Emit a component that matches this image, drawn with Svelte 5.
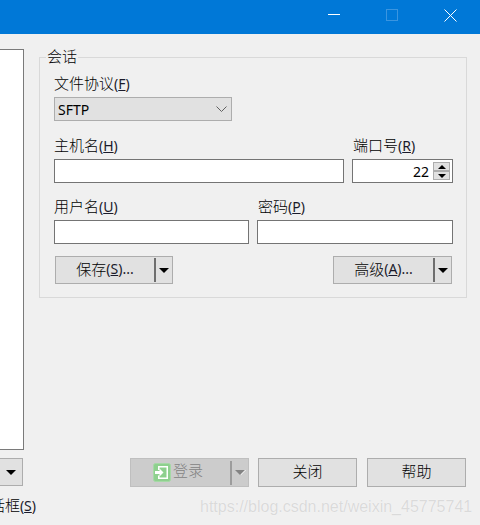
<script>
  const buttonsBottom = ['关闭', '帮助'];
</script>

<div class="window">
  <header class="titlebar">
    <svg class="winicon" width="12" height="12" viewBox="0 0 12 12"><path d="M0 5.5h12" stroke="#fff" fill="none" /></svg>
    <svg class="winicon" width="12" height="13" viewBox="0 0 12 13"><rect x="0.5" y="0.5" width="11" height="11" stroke="#3a95e0" fill="none" /></svg>
    <svg class="winicon" width="13" height="13" viewBox="0 0 13 13"><path d="M0.5 0.5l12 12M12.5 0.5l-12 12" stroke="#fff" fill="none" /></svg>
  </header>

  <div class="content">
    <div class="tree"></div>

    <section class="group">
      <div class="legend">会话</div>

      <label class="lbl first" for="proto">文件协议<span class="key">(<u>F</u>)</span></label>
      <div class="select" id="proto">
        <span>SFTP</span>
        <svg width="11" height="6" viewBox="0 0 11 6"><path d="M0.5 0.5L5.5 5.5l5-5" stroke="#606060" fill="none" /></svg>
      </div>

      <div class="row host">
        <div class="field">
          <label class="lbl" for="host">主机名<span class="key">(<u>H</u>)</span></label>
          <input id="host" type="text" />
        </div>
        <div class="field">
          <label class="lbl inset" for="port">端口号<span class="key">(<u>R</u>)</span></label>
          <div class="portbox" id="port">
            <span class="num">22</span>
            <div class="spin">
              <div class="spinbtn"><i class="up"></i></div>
              <div class="spinbtn"><i class="down"></i></div>
            </div>
          </div>
        </div>
      </div>

      <div class="row user">
        <div class="field">
          <label class="lbl" for="user">用户名<span class="key">(<u>U</u>)</span></label>
          <input id="user" type="text" />
        </div>
        <div class="field">
          <label class="lbl inset" for="pass">密码<span class="key">(<u>P</u>)</span></label>
          <input id="pass" type="password" />
        </div>
      </div>

      <div class="actions">
        <div class="btn split">
          <span class="cap">保存<span class="key">(<u>S</u>)...</span></span>
          <span class="sep"></span>
          <span class="drop"><i class="down big"></i></span>
        </div>
        <div class="btn split">
          <span class="cap">高级<span class="key">(<u>A</u>)...</span></span>
          <span class="sep"></span>
          <span class="drop"><i class="down big"></i></span>
        </div>
      </div>
    </section>
  </div>

  <div class="bottom">
    <div class="btn leftdrop"><i class="down big"></i></div>
    <div class="btn split login">
      <span class="cap">
        <svg width="18" height="19" viewBox="0 0 18 19">
          <rect x="0.5" y="0.5" width="17" height="18" rx="2" fill="#8ed08e" stroke="#a5d9a5" />
          <path d="M5 3h10v13H5v-3.5h1.5V14.5h7v-10h-7V7H5z" fill="#fff" />
          <path d="M2 8h4.5V5.5l4 4-4 4V11H2z" fill="#fff" />
        </svg>
        <span>登录</span>
      </span>
      <span class="sep"></span>
      <span class="drop"><i class="down big"></i></span>
    </div>
    {#each buttonsBottom as b}
      <div class="btn plain">{b}</div>
    {/each}
  </div>

  <div class="foot"><span>登录对话框<span class="key">(<u>S</u>)</span></span></div>

  <div class="watermark">https://blog.csdn.net/weixin_45775741</div>
</div>

<style>
  :global(body) {
    margin: 0;
    background: #f0f0f0;
  }

  .window {
    position: relative;
    width: 480px;
    height: 525px;
    overflow: hidden;
    background: #f0f0f0;
    color: #000;
    font-family: "Noto Sans CJK SC", "Noto Sans", sans-serif;
    font-size: 15px;
    font-weight: 300;
    line-height: 17px;
  }

  .titlebar {
    height: 34px;
    background: #0078d7;
    display: flex;
    align-items: center;
    justify-content: flex-end;
    gap: 46px;
    padding-right: 23px;
    box-sizing: border-box;
  }

  .winicon {
    display: block;
    margin-top: -4px;
  }

  .content {
    display: flex;
    padding-top: 15px;
  }

  .tree {
    width: 24px;
    height: 401px;
    box-sizing: border-box;
    background: #fff;
    border: 1px solid #7a7a7a;
    border-left: 0;
  }

  .group {
    width: 428px;
    height: 241px;
    margin: 8px 0 0 15px;
    padding: 0 13px 0 14px;
    box-sizing: border-box;
    border: 1px solid #d9d9d9;
  }

  .legend {
    width: fit-content;
    margin: -10px 0 0 -8px;
    padding: 0 1px;
    background: #f0f0f0;
    height: 16px;
    line-height: 16px;
  }

  .lbl {
    display: block;
    height: 17px;
    line-height: 17px;
  }

  .lbl.first {
    margin-top: 10px;
  }

  .lbl.inset {
    padding-left: 1px;
  }

  .key {
    font-family: "Noto Sans", sans-serif;
    font-size: 14px;
    font-weight: 400;
    color: #1a1a2a;
  }

  .select {
    width: 178px;
    height: 24px;
    margin-top: 6px;
    padding: 0 4px 0 3px;
    box-sizing: border-box;
    border: 1px solid #adadad;
    background: #e1e1e1;
    display: flex;
    align-items: center;
    justify-content: space-between;
    font-family: "Noto Sans", sans-serif;
    font-size: 14px;
    font-weight: 400;
  }

  .row {
    display: grid;
    column-gap: 8px;
  }

  .row.host {
    grid-template-columns: 290px 101px;
    margin-top: 15px;
  }

  .row.user {
    grid-template-columns: 195px 196px;
    margin-top: 14px;
  }

  .field {
    display: flex;
    flex-direction: column;
    gap: 6px;
  }

  input {
    display: block;
    height: 24px;
    width: 100%;
    box-sizing: border-box;
    margin: 0;
    padding: 0;
    border: 1px solid #747474;
    background: #fff;
    outline: none;
    border-radius: 0;
  }

  .portbox {
    height: 24px;
    box-sizing: border-box;
    border: 1px solid #747474;
    background: #fff;
    display: flex;
    align-items: center;
    justify-content: flex-end;
    padding-right: 2px;
    gap: 4px;
    font-family: "Noto Sans", sans-serif;
    font-size: 14px;
    font-weight: 400;
  }

  .spin {
    width: 17px;
    height: 18px;
    display: flex;
    flex-direction: column;
  }

  .spinbtn {
    flex: 1;
    box-sizing: border-box;
    border: 1px solid #adadad;
    background: #e1e1e1;
    display: flex;
    align-items: center;
    justify-content: center;
  }

  .up,
  .down {
    display: block;
    width: 0;
    height: 0;
    border-left: 4px solid transparent;
    border-right: 4px solid transparent;
  }

  .up {
    border-bottom: 4px solid #000;
  }

  .down {
    border-top: 4px solid #000;
  }

  .down.big {
    border-left-width: 5.5px;
    border-right-width: 5.5px;
    border-top-width: 5px;
  }

  .actions {
    display: flex;
    justify-content: space-between;
    width: 397px;
    margin: 12px 0 0 1px;
  }

  .actions .split:last-child {
    width: 119px;
  }

  .btn {
    box-sizing: border-box;
    border: 1px solid #adadad;
    background: #e1e1e1;
    display: flex;
    align-items: center;
  }

  .split {
    width: 118px;
    height: 28px;
  }

  .cap {
    flex: 1;
    display: flex;
    align-items: center;
    justify-content: center;
    padding-bottom: 3px;
  }

  .sep {
    width: 2px;
    height: 24px;
    background: #6e6e6e;
  }

  .drop {
    width: 16px;
    display: flex;
    justify-content: center;
  }

  .bottom {
    display: flex;
    margin-top: 8px;
    height: 29px;
  }

  .leftdrop {
    width: 23px;
    height: 28px;
    border-left: 0;
    justify-content: center;
    margin-right: 107px;
  }

  .login {
    width: 119px;
    height: 29px;
    margin-right: 9px;
    background: #cccccc;
    border-color: #bfbfbf;
    color: #838383;
  }

  .login .cap {
    gap: 2px;
    padding-right: 5px;
    padding-bottom: 0;
  }

  .login .cap span {
    padding-bottom: 6px;
  }

  .login .sep {
    background: #9c9c9c;
  }

  .login .down {
    border-top-color: #838383;
    filter: drop-shadow(1px 0 0 #fff);
  }

  .plain {
    width: 99px;
    height: 29px;
    justify-content: center;
    margin-right: 10px;
    padding-bottom: 5px;
  }

  .foot {
    width: 36px;
    margin-top: 9px;
    overflow: hidden;
    display: flex;
    justify-content: flex-end;
    white-space: nowrap;
  }

  .foot > span {
    flex: none;
  }

  .watermark {
    position: absolute;
    left: 200px;
    top: 498px;
    font-family: "Liberation Sans", sans-serif;
    font-size: 16px;
    font-weight: 400;
    color: #dadada;
    text-shadow: 0 0 1px #fff;
    white-space: nowrap;
  }
</style>
